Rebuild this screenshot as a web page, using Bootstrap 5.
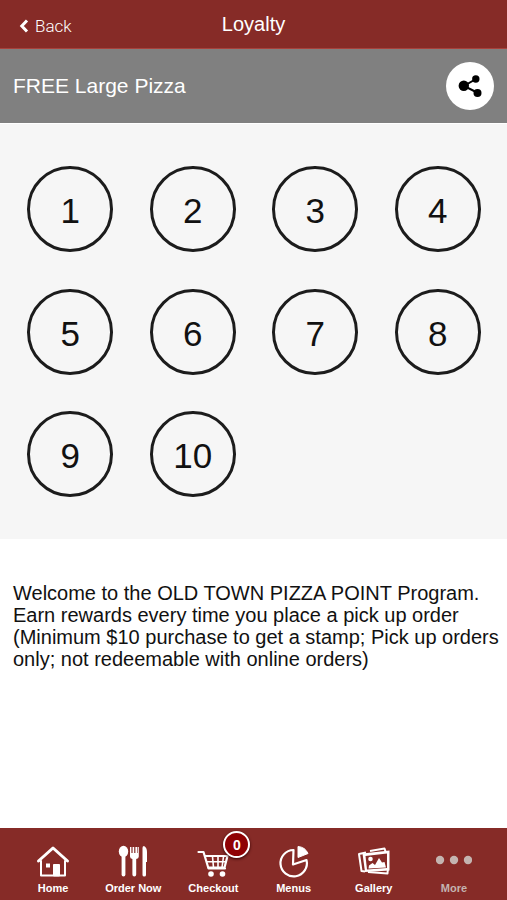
<!DOCTYPE html>
<html lang="en">
<head>
<meta charset="utf-8">
<meta name="viewport" content="width=device-width, initial-scale=1">
<title>Loyalty</title>
<link href="https://cdn.jsdelivr.net/npm/bootstrap@5.3.0/dist/css/bootstrap.min.css" rel="stylesheet">
<style>
  body { font-family: "Liberation Sans", Arial, sans-serif; color: #111; background: #fff; }
  .app-bar { display: grid; grid-template-columns: 1fr auto 1fr; height: 49px; background: #862b27; border-bottom: 1px solid #a8423c; }
  .app-title { font-size: 20px; line-height: 24px; }
  .back-link { font-family: Roboto, "Liberation Sans", sans-serif; font-weight: 300; font-size: 17px; line-height: 24px; padding-left: 19px; gap: 6px; padding-top: 3px; }
  .reward-bar { height: 74px; background: #808080; padding: 0 13px; }
  .reward-name { font-size: 21px; line-height: 26px; }
  .share-btn { width: 48px; height: 48px; background: #fff; color: #000; }
  .stamps { background: #f6f6f6; border-top: 1px solid #fff; padding: 24px 8px 23px 9px; }
  .stamp-cell { padding: 15%; }
  .stamp { aspect-ratio: 1; border: 3px solid #1c1c1c; font-size: 35px; line-height: 40px; padding-top: 4px; }
  .about { font-size: 20px; line-height: 22px; padding: 43px 8px 43px 13px; }
  .tab-bar { height: 72px; background: #862b27; padding: 0 13px; }
  .tab-item { color: #fff; font-size: 11px; line-height: 14px; font-weight: 700; padding-bottom: 5px; }
  .tab-item.muted { color: #c4b4b0; }
  .tab-icon { width: 36px; height: 36px; margin-bottom: 2px; }
  .count { width: 27px; height: 27px; background: #8f0204; border: 2px solid #fff; font-size: 14px; line-height: 14px; top: 3px; left: 50%; margin-left: 10px; box-shadow: 0 1px 3px #300; }
</style>
</head>
<body class="d-flex flex-column min-vh-100">
<header class="app-bar align-items-center text-white">
  <a href="#" class="back-link d-flex align-items-center text-white text-decoration-none">
    <svg width="10" height="14" viewBox="0 0 10 14" fill="none" stroke="currentColor" stroke-width="3" aria-hidden="true"><path d="M8 1.5 2.8 7 8 12.5"/></svg>
    Back</a>
  <h1 class="app-title m-0 fw-normal">Loyalty</h1>
</header>
<div class="reward-bar d-flex align-items-center justify-content-between text-white">
  <h2 class="reward-name m-0 fw-normal">FREE Large Pizza</h2>
  <button type="button" class="share-btn btn rounded-circle p-0 border-0 d-flex align-items-center justify-content-center" aria-label="Share">
    <svg width="26" height="26" viewBox="0 0 26 26" fill="currentColor" aria-hidden="true"><path d="M19 6 7 13 20 19.5" fill="none" stroke="currentColor" stroke-width="2"/><circle cx="6.800" cy="12.800" r="5.200"/><circle cx="18.800" cy="6" r="3.700"/><circle cx="20.500" cy="20" r="4"/></svg>
  </button>
</div>
<main class="flex-grow-1">
  <section class="stamps" aria-label="Stamps">
    <div class="row row-cols-4 g-0">
      <div class="col"><div class="stamp-cell"><div class="stamp rounded-circle d-flex align-items-center justify-content-center">1</div></div></div>
      <div class="col"><div class="stamp-cell"><div class="stamp rounded-circle d-flex align-items-center justify-content-center">2</div></div></div>
      <div class="col"><div class="stamp-cell"><div class="stamp rounded-circle d-flex align-items-center justify-content-center">3</div></div></div>
      <div class="col"><div class="stamp-cell"><div class="stamp rounded-circle d-flex align-items-center justify-content-center">4</div></div></div>
      <div class="col"><div class="stamp-cell"><div class="stamp rounded-circle d-flex align-items-center justify-content-center">5</div></div></div>
      <div class="col"><div class="stamp-cell"><div class="stamp rounded-circle d-flex align-items-center justify-content-center">6</div></div></div>
      <div class="col"><div class="stamp-cell"><div class="stamp rounded-circle d-flex align-items-center justify-content-center">7</div></div></div>
      <div class="col"><div class="stamp-cell"><div class="stamp rounded-circle d-flex align-items-center justify-content-center">8</div></div></div>
      <div class="col"><div class="stamp-cell"><div class="stamp rounded-circle d-flex align-items-center justify-content-center">9</div></div></div>
      <div class="col"><div class="stamp-cell"><div class="stamp rounded-circle d-flex align-items-center justify-content-center">10</div></div></div>
    </div>
  </section>
  <p class="about m-0">Welcome to the OLD TOWN PIZZA POINT Program.<br>Earn rewards every time you place a pick up order (Minimum $10 purchase to get a stamp; Pick up orders only; not redeemable with online orders)</p>
</main>
<nav class="tab-bar d-flex" aria-label="Main">
  <a href="#" class="tab-item col d-flex flex-column align-items-center justify-content-end text-decoration-none">
    <svg class="tab-icon" viewBox="0 0 36 36" fill="none" stroke="currentColor" stroke-width="2" stroke-linecap="round" stroke-linejoin="round" aria-hidden="true"><path d="M3.500 18 18 5 32.500 18" stroke-width="3"/><path d="M6 18V32.500H30V18"/><path d="M18.500 32.500V21.500H24.500V32.500Z" fill="currentColor" stroke-width="1"/><path d="M11 20.500h4v4h-4z" fill="currentColor" stroke="none"/></svg>
    <span>Home</span></a>
  <a href="#" class="tab-item col d-flex flex-column align-items-center justify-content-end text-decoration-none">
    <svg class="tab-icon" viewBox="0 0 36 36" fill="currentColor" aria-hidden="true"><ellipse cx="8.500" cy="8.500" rx="4.700" ry="5.700"/><rect x="6.600" y="12" width="3.800" height="21.500" rx="1.900"/><path d="M15 4h1.400v6h1.200V4h1.600v6h1.200V4h1.600v6h.6V4h1.200v9.500q0 2-2.600 2.500v15.500a1.900 1.900 0 0 1-3.800 0V16q-2.400-.5-2.400-2.500z"/><path d="M27.500 32V5q0-2 1.500-2 3 1.500 3 6v10h-1v13q0 1.500-1.750 1.500T27.500 32z"/></svg>
    <span>Order Now</span></a>
  <a href="#" class="tab-item position-relative col d-flex flex-column align-items-center justify-content-end text-decoration-none">
    <svg class="tab-icon" viewBox="0 0 36 36" fill="none" stroke="currentColor" stroke-width="2.200" stroke-linecap="round" stroke-linejoin="round" aria-hidden="true"><path d="M3.500 9H8.500L13.500 25.500H30"/><path d="M10 13H32.500L29.500 24.500H13.500"/><path d="M12 18.700H31M17.500 13.500l1 11M23 13.500v11M28.500 13.500l-1.500 11" stroke-width="1.600"/><circle cx="16" cy="31" r="2.800" fill="currentColor" stroke="none"/><circle cx="27.500" cy="31" r="2.800" fill="currentColor" stroke="none"/></svg>
    <span class="count position-absolute rounded-circle d-flex align-items-center justify-content-center">0</span>
    <span>Checkout</span></a>
  <a href="#" class="tab-item col d-flex flex-column align-items-center justify-content-end text-decoration-none">
    <svg class="tab-icon" viewBox="0 0 36 36" fill="none" stroke="currentColor" stroke-width="2.200" stroke-linejoin="round" aria-hidden="true"><path d="M17.500 7A13.200 13.200 0 1 0 30.500 17L17 21.500Z"/><path d="M22 3.500Q29 4 32 10.500L22 14.500Z" fill="currentColor" stroke-width="1"/></svg>
    <span>Menus</span></a>
  <a href="#" class="tab-item col d-flex flex-column align-items-center justify-content-end text-decoration-none">
    <svg class="tab-icon" viewBox="0 0 36 36" aria-hidden="true"><g fill="none" stroke="currentColor" stroke-width="2" stroke-linejoin="round"><path d="M9 28.500 5.500 28 3 11 10 9.500"/><path d="M14 8 28.500 5.500 29.500 8.500"/><path d="M12 29 31.500 30.500 31.800 27"/></g><path d="M6.500 10.500 33.500 7.500 33.500 27.500 9 29Z" fill="currentColor"/><path d="M9.500 13 31 10.500 31 25 11 26.500Z" fill="#862b27"/><path d="M12.500 25.500 13 22.500 16.500 20 19 22 23 15 26 19.500 28.500 19 30 24.500Z" fill="currentColor"/><circle cx="14.500" cy="16" r="2.300" fill="currentColor"/></svg>
    <span>Gallery</span></a>
  <a href="#" class="tab-item muted col d-flex flex-column align-items-center justify-content-end text-decoration-none">
    <svg class="tab-icon" viewBox="0 0 36 36" fill="currentColor" aria-hidden="true"><circle cx="4" cy="17" r="4.200"/><circle cx="18" cy="17" r="4.200"/><circle cx="32" cy="17" r="4.200"/></svg>
    <span>More</span></a>
</nav>
<script src="https://cdn.jsdelivr.net/npm/bootstrap@5.3.0/dist/js/bootstrap.bundle.min.js"></script>
</body>
</html>
